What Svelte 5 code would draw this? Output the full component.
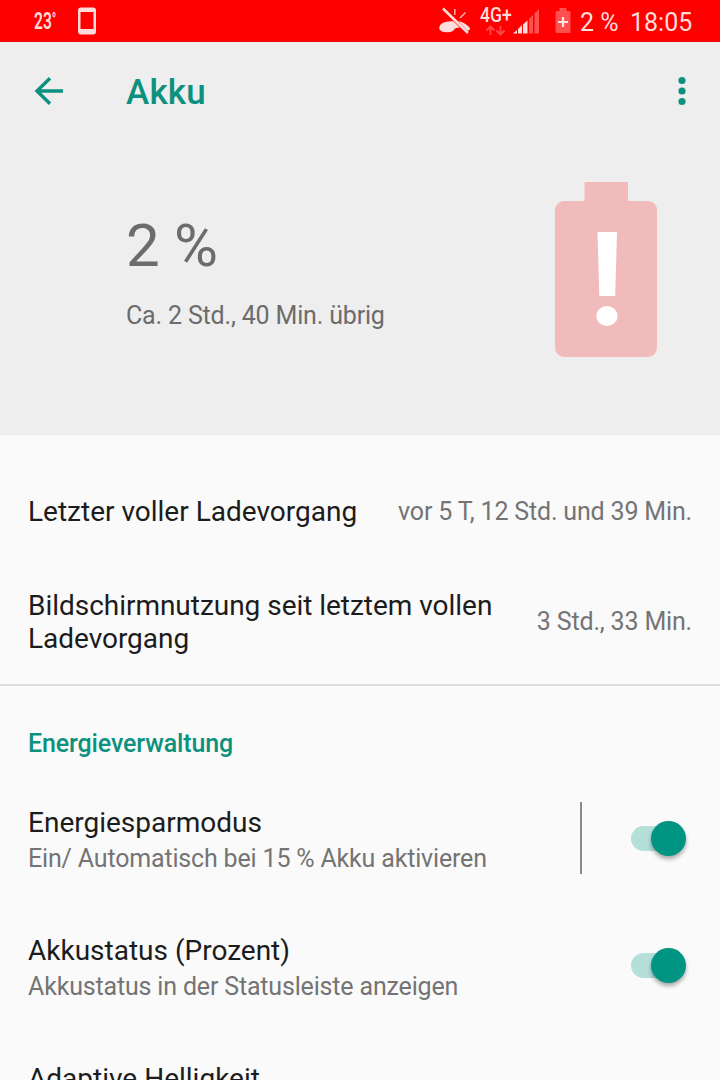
<script>
  let saver = $state(true);
  let percent = $state(true);
</script>

{#snippet toggle(on, label, flip)}
  <button class="switch" class:on role="switch" aria-checked={on} aria-label={label} onclick={flip}>
    <span class="thumb"></span>
  </button>
{/snippet}

<div class="screen">
  <div class="status">
    <span class="temp">23<small>°</small></span>
    <svg class="phone" width="18" height="28" viewBox="0 0 18 28">
      <path fill="#ffdcdc" fill-rule="evenodd" d="M3 .5h12a3 3 0 0 1 3 3v21a3 3 0 0 1-3 3H3a3 3 0 0 1-3-3v-21a3 3 0 0 1 3-3ZM2.500 5v17h13V5Z" />
    </svg>
    <svg class="missed" width="32" height="28" viewBox="0 0 32 28">
      <g fill="none" stroke="#ffdcdc">
        <path d="M15.800 2v6M26.500 5.500l-5.500 5.500" stroke-width="1.500" opacity=".8" />
        <path d="m4 1.500 25 24.500" stroke-width="2.500" />
      </g>
      <path fill="#ffdcdc" d="M.4 20c.8-3.500 5.500-5.500 11-5.700l3-.1 6.500 6.600c-2.500-.3-4 .2-5.400 1.200-1.700 3.300-5.500 3.800-10.500 2.900C1.700 24.300-.2 22.500.4 20Z" />
      <path fill="#ffdcdc" d="M19 14c4.500.9 10 4 12 7.500.5 1-1 2.200-2.700 2Z" />
    </svg>
    <div class="network">
      <span>4G+</span>
      <svg width="20" height="11" viewBox="0 0 20 11">
        <path d="M5.500 10V2M1.500 5.500l4-4 4 4M15.500 1v8M11.500 5.500l4 4 4-4" fill="none" stroke="#ff4646" stroke-width="2" />
      </svg>
    </div>
    <svg class="signal" width="27" height="26" viewBox="0 0 27 26">
      <path fill="#ffdcdc" d="M0 25.500 4 22v3.500ZM5 21l4-4v8.500H5ZM10 16.500l4.500-4v13H10Z" />
      <path fill="#ff5050" d="m16 11 4-4v18.500h-4ZM21.500 5.500 26 1v24.500h-4.500Z" />
    </svg>
    <svg class="charge" width="16" height="26" viewBox="0 0 16 26">
      <path fill="#ff5050" d="M4.500 0h7v3H14a1.500 1.500 0 0 1 1.500 1.500v19A1.500 1.500 0 0 1 14 25H2a1.500 1.500 0 0 1-1.500-1.500v-19A1.500 1.500 0 0 1 2 3h2.500Z" />
      <path d="M8 9v10M3 14h10" stroke="#ffe6e6" stroke-width="2.200" />
    </svg>
    <span class="level">2 %</span>
    <span class="clock">18:05</span>
  </div>

  <header>
    <div class="bar">
      <svg class="back" width="30" height="30" viewBox="0 0 30 30">
        <path d="M29 15H3M16 2.200 3 15l13 12.800" fill="none" stroke="#0d917f" stroke-width="3.400" />
      </svg>
      <h1>Akku</h1>
      <svg class="more" width="8" height="30" viewBox="0 0 8 30" fill="#0d917f">
        <circle cx="4" cy="4.500" r="3.600" /><circle cx="4" cy="15" r="3.600" /><circle cx="4" cy="25.500" r="3.600" />
      </svg>
    </div>
    <div class="summary">
      <div>
        <div class="big">2 %</div>
        <div class="left">Ca. 2 Std., 40 Min. übrig</div>
      </div>
      <svg width="102" height="176" viewBox="0 0 102 176">
        <path fill="#f1bbbb" d="M29.500 0H73v19h20a9 9 0 0 1 9 9v138a9 9 0 0 1-9 9H9a9 9 0 0 1-9-9V28a9 9 0 0 1 9-9h20.500Z" />
        <path fill="#fff" d="M42.500 50H62l-1.800 64H44.300Z" />
        <ellipse fill="#fff" cx="52" cy="134" rx="10.700" ry="10" />
      </svg>
    </div>
  </header>

  <main>
    <section class="usage">
      <div class="row one">
        <span class="title">Letzter voller Ladevorgang</span>
        <span class="value">vor 5 T, 12 Std. und 39 Min.</span>
      </div>
      <div class="row two">
        <span class="title">Bildschirmnutzung seit letztem vollen<br />Ladevorgang</span>
        <span class="value">3 Std., 33 Min.</span>
      </div>
    </section>
    <h2>Energieverwaltung</h2>
    <div class="setting">
      <div class="copy">
        <div class="title">Energiesparmodus</div>
        <div class="sub">Ein/ Automatisch bei 15 % Akku aktivieren</div>
      </div>
      <i class="divider"></i>
      {@render toggle(saver, 'Energiesparmodus', () => (saver = !saver))}
    </div>
    <div class="setting compact">
      <div class="copy">
        <div class="title">Akkustatus (Prozent)</div>
        <div class="sub">Akkustatus in der Statusleiste anzeigen</div>
      </div>
      {@render toggle(percent, 'Akkustatus (Prozent)', () => (percent = !percent))}
    </div>
    <div class="setting">
      <div class="copy"><div class="title">Adaptive Helligkeit</div></div>
    </div>
  </main>
</div>

<style>
  :global(body) { margin: 0; overflow: hidden; }
  .screen {
    width: 720px; height: 1080px; overflow: hidden; background: #fafafa;
    font-family: Roboto, sans-serif; color: #1c1c1c; display: flex; flex-direction: column;
    white-space: nowrap;
  }
  .screen * { box-sizing: border-box; }
  svg { display: block; flex: none; }
  .status {
    height: 42px; flex: none; background: #f00; color: #ffdcdc; display: flex; align-items: center;
    padding: 0 28px 0 34px; border-bottom: 1px solid #e01010;
  }
  .temp { font-size: 24px; font-weight: 600; line-height: 28px; width: 44px; transform: scaleX(.65); transform-origin: left; }
  .temp small { font-size: 18px; vertical-align: 3px; }
  .phone { margin-top: 1px; }
  .missed { margin-left: auto; }
  .network { width: 33px; margin-left: 9px; height: 34px; font-weight: 500; }
  .network span { display: block; font-size: 21px; line-height: 22px; transform: scaleX(.84); transform-origin: left; }
  .network svg { margin: -1px 0 0 5px; }
  .charge { margin-left: 15px; }
  .level { font-size: 25px; line-height: 30px; margin-left: 9px; width: 50px; padding-top: 4px; height: 34px; }
  .clock { font-size: 25px; line-height: 30px; width: 62px; padding-top: 4px; height: 34px; }
  header { height: 393px; flex: none; background: #eee; }
  .bar { height: 98px; display: flex; align-items: center; padding: 0 34px; }
  h1 { margin: 4px 0 0 62px; font: 500 35px/42px Roboto, sans-serif; color: #0d917f; letter-spacing: .2px; }
  .more { margin-left: auto; }
  .summary { display: flex; justify-content: space-between; padding: 42px 63px 0 126px; color: #6c6c6c; }
  .big { font-size: 60px; line-height: 70px; margin-top: 29px; letter-spacing: -.3px; }
  .left { font-size: 25px; line-height: 30px; margin-top: 20px; letter-spacing: -.17px; }
  .usage { height: 251px; border-bottom: 2px solid #dedede; padding: 51px 28px 0; }
  .row { display: flex; justify-content: space-between; align-items: center; }
  .one { height: 52px; }
  .two { height: 66px; margin-top: 51px; }
  .title { font-size: 28px; line-height: 32px; }
  .two .title { line-height: 33px; letter-spacing: -.03px; }
  .value, .sub { font-size: 25px; color: #747474; line-height: 30px; letter-spacing: -.17px; }
  h2 { margin: 43px 0 0 28px; font: 500 25px/30px Roboto, sans-serif; color: #0d917f; letter-spacing: -.12px; }
  .setting { height: 128px; display: flex; align-items: center; padding: 0 34px 0 28px; }
  h2 + .setting { margin-top: 15px; }
  .copy { height: 72px; padding-top: 5px; margin-right: auto; }
  .sub { margin-top: 5px; }
  .divider { width: 2px; height: 72px; background: #8b8b8b; margin-right: 49px; }
  .switch {
    width: 52px; height: 25px; border: 0; border-radius: 13px; background: #c4c4c4; padding: 0;
    margin-right: 3px; display: flex; align-items: center;
  }
  .compact .switch { margin-bottom: 2px; }
  .thumb { width: 35px; height: 35px; flex: none; border-radius: 50%; background: #f1f1f1; box-shadow: 0 3px 4px #0005; }
  .on { background: #b5dfd9; }
  .on .thumb { background: #009483; margin-left: 20px; }
</style>
